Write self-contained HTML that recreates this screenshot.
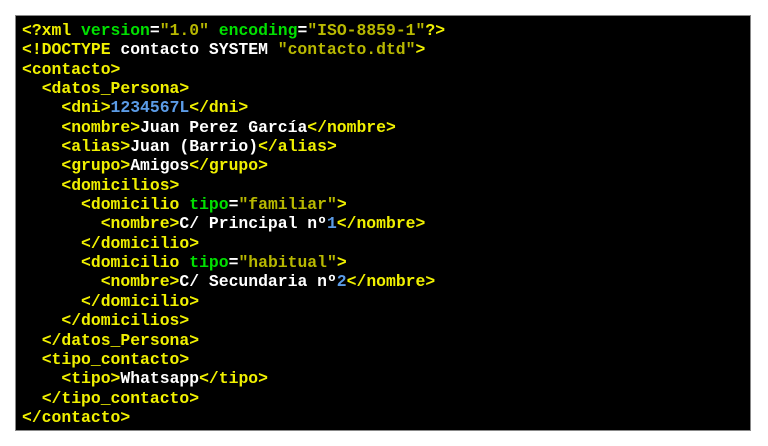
<!DOCTYPE html>
<html><head><meta charset="utf-8"><style>
html,body{margin:0;padding:0;background:#fff;width:768px;height:446px;overflow:hidden}
#b{position:absolute;left:15px;top:15px;width:734px;height:414px;background:#000;border:1px solid #888}
pre{position:absolute;left:6px;top:5px;margin:0;font-family:"Liberation Mono",monospace;font-weight:bold;font-size:16.4px;line-height:19.35px;color:#fff}
.t{color:#f0f000}.a{color:#00e000}.s{color:#b8b800}.n{color:#5b9be6}
</style></head><body><div id="b"><pre><span class="t">&lt;?xml</span> <span class="a">version</span>=<span class="s">"1.0"</span> <span class="a">encoding</span>=<span class="s">"ISO-8859-1"</span><span class="t">?&gt;</span>
<span class="t">&lt;!DOCTYPE</span> contacto SYSTEM <span class="s">"contacto.dtd"</span><span class="t">&gt;</span>
<span class="t">&lt;contacto&gt;</span>
  <span class="t">&lt;datos_Persona&gt;</span>
    <span class="t">&lt;dni&gt;</span><span class="n">1234567L</span><span class="t">&lt;/dni&gt;</span>
    <span class="t">&lt;nombre&gt;</span>Juan Perez García<span class="t">&lt;/nombre&gt;</span>
    <span class="t">&lt;alias&gt;</span>Juan (Barrio)<span class="t">&lt;/alias&gt;</span>
    <span class="t">&lt;grupo&gt;</span>Amigos<span class="t">&lt;/grupo&gt;</span>
    <span class="t">&lt;domicilios&gt;</span>
      <span class="t">&lt;domicilio</span> <span class="a">tipo</span>=<span class="s">"familiar"</span><span class="t">&gt;</span>
        <span class="t">&lt;nombre&gt;</span>C/ Principal nº<span class="n">1</span><span class="t">&lt;/nombre&gt;</span>
      <span class="t">&lt;/domicilio&gt;</span>
      <span class="t">&lt;domicilio</span> <span class="a">tipo</span>=<span class="s">"habitual"</span><span class="t">&gt;</span>
        <span class="t">&lt;nombre&gt;</span>C/ Secundaria nº<span class="n">2</span><span class="t">&lt;/nombre&gt;</span>
      <span class="t">&lt;/domicilio&gt;</span>
    <span class="t">&lt;/domicilios&gt;</span>
  <span class="t">&lt;/datos_Persona&gt;</span>
  <span class="t">&lt;tipo_contacto&gt;</span>
    <span class="t">&lt;tipo&gt;</span>Whatsapp<span class="t">&lt;/tipo&gt;</span>
  <span class="t">&lt;/tipo_contacto&gt;</span>
<span class="t">&lt;/contacto&gt;</span></pre></div></body></html>
